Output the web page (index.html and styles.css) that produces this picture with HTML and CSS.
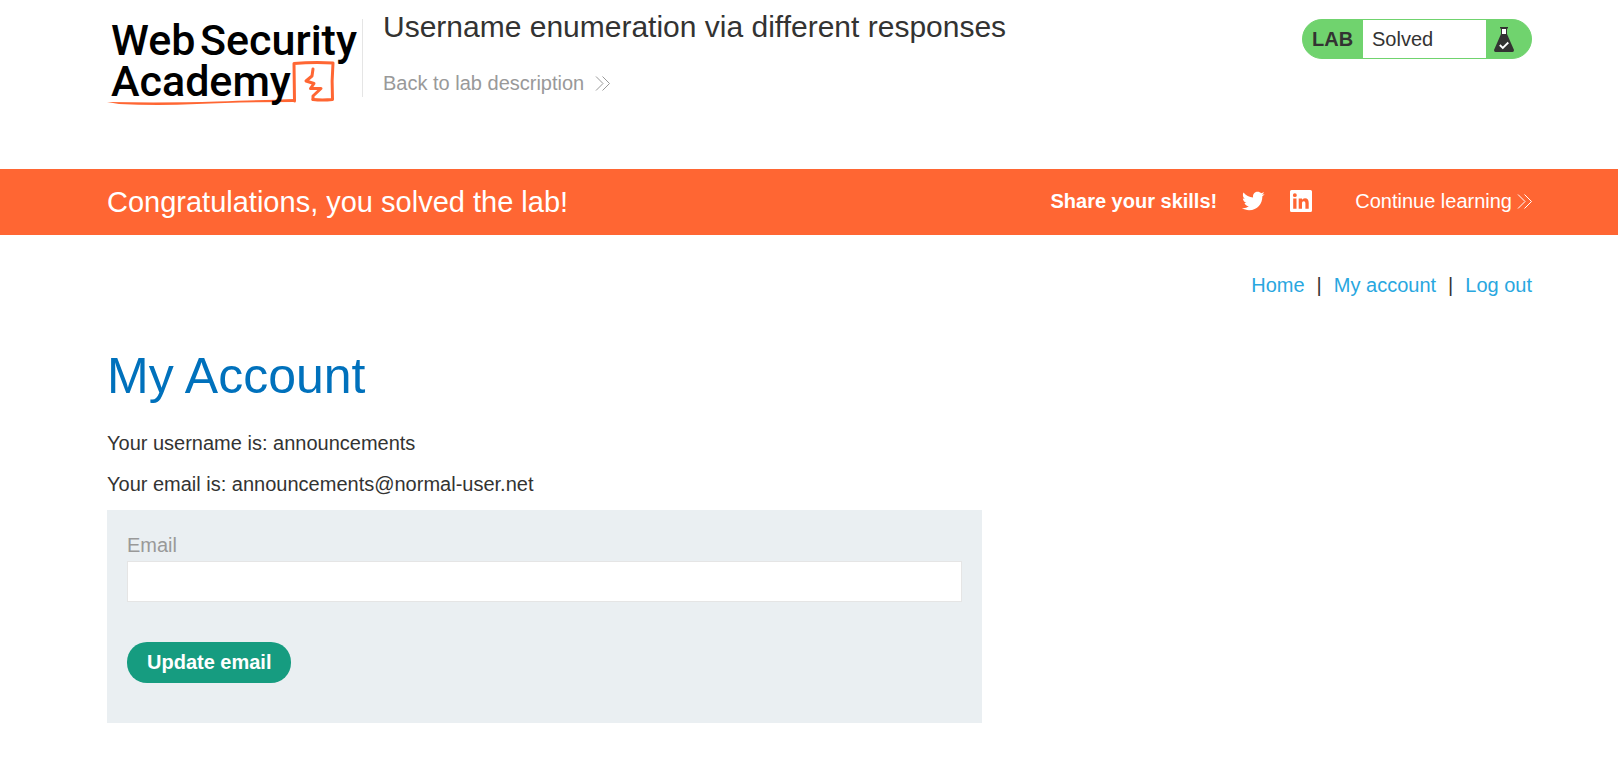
FILE: index.html
```html
<!DOCTYPE html>
<html lang="en">
<head>
<meta charset="utf-8">
<meta name="viewport" content="width=device-width, initial-scale=1">
<title>Username enumeration via different responses</title>
<link rel="stylesheet" href="styles.css">
</head>
<body>
<header class="lab-header container">
  <a class="logo" href="#" aria-label="Web Security Academy">
    <svg width="250" height="90" viewBox="0 0 250 90">
      <g fill="none" stroke="#ff6633" stroke-linecap="round" stroke-linejoin="round">
        <path stroke-width="3" d="M187.500 82L187 44.500Q206 43 226 44Q224.500 62 225.500 80.500Q215 81.500 206 80.500"/>
        <path stroke-width="3" d="M206 50L205 57L199 62L207 64.500L203.500 69.500L214 69.500L206 77L206 80.500"/>
      </g>
      <path fill="#ff6633" d="M0 83Q60 84 110 82.500T188 80V83Q130 83 90 85T12 85Z"/>
      <text class="logo-text" x="4" y="36">Web</text>
      <text class="logo-text" x="93" y="36">Security</text>
      <text class="logo-text" x="4" y="77">Academy</text>
    </svg>
  </a>
  <div class="title">
    <h2>Username enumeration via different responses</h2>
    <a class="back" href="#">Back to lab description
      <svg class="chevrons" width="14" height="15" viewBox="0 0 14 15"><path d="M0 .5l7 7-7 7M6.500 .5l7 7-7 7"/></svg>
    </a>
  </div>
  <div class="status">
    <span class="status-lab">LAB</span>
    <span class="status-text">Solved</span>
    <span class="status-icon">
      <svg width="20" height="26" viewBox="0 0 20 26">
        <path fill="#fff" d="M7 2h6v6H7z"/>
        <path fill="#333332" d="M6 0h8v1.500h-1V7h-1V2H8v5H7V1.500H6zM7 7h6l7 16q0 2-1.500 2h-17Q0 25 0 23z"/>
        <path fill="none" stroke="#fff" stroke-width="1.800" d="M5.800 18l3 3 5.500-5.500"/>
      </svg>
    </span>
  </div>
</header>

<section class="banner">
  <div class="banner-inner container">
    <h4>Congratulations, you solved the lab!</h4>
    <div class="share">
      <strong>Share your skills!</strong>
      <a href="#" aria-label="Twitter"><svg width="24" height="24" viewBox="0 0 24 24"><path fill="#fff" d="M23.643 4.937c-.835.37-1.732.62-2.675.733.962-.576 1.700-1.490 2.048-2.578-.9.534-1.897.922-2.958 1.130-.85-.904-2.060-1.470-3.400-1.470-2.572 0-4.658 2.086-4.658 4.660 0 .364.042.718.120 1.060-3.873-.195-7.304-2.050-9.602-4.868-.4.690-.63 1.490-.63 2.342 0 1.616.823 3.043 2.072 3.878-.764-.025-1.482-.234-2.110-.583v.060c0 2.257 1.605 4.140 3.737 4.568-.392.106-.803.162-1.227.162-.3 0-.593-.028-.877-.082.593 1.850 2.313 3.198 4.352 3.234-1.595 1.250-3.604 1.995-5.786 1.995-.376 0-.747-.022-1.112-.065 2.062 1.323 4.510 2.093 7.140 2.093 8.570 0 13.255-7.098 13.255-13.254 0-.2-.005-.402-.014-.602.910-.658 1.700-1.477 2.323-2.410z"/></svg></a>
      <a href="#" aria-label="LinkedIn"><svg width="24" height="24" viewBox="0 0 24 24"><path fill="#fff" fill-rule="evenodd" d="M2.500 1h19a1.500 1.500 0 0 1 1.500 1.500v19a1.500 1.500 0 0 1-1.500 1.500h-19a1.500 1.500 0 0 1-1.500-1.500v-19a1.500 1.500 0 0 1 1.500-1.500zM4.200 9.500v10.200h3.300V9.500zM5.850 4.200a1.950 1.950 0 1 0 0 3.900 1.950 1.950 0 0 0 0-3.900zM9.700 9.500v10.200H13v-5.200c0-1.400.5-2.300 1.800-2.300s1.600 1 1.600 2.400v5.100h3.300v-5.700c0-2.900-1-4.700-3.700-4.700-1.500 0-2.500.8-3 1.700V9.500z"/></svg></a>
      <a class="continue" href="#">Continue learning
        <svg class="chevrons" width="14" height="15" viewBox="0 0 14 15"><path d="M0 .5l7 7-7 7M6.500 .5l7 7-7 7"/></svg>
      </a>
    </div>
  </div>
</section>

<main class="container">
  <nav class="nav">
    <a href="#">Home</a><span>|</span><a href="#">My account</a><span>|</span><a href="#">Log out</a>
  </nav>
  <h1>My Account</h1>
  <p>Your username is: announcements</p>
  <p>Your email is: announcements@normal-user.net</p>
  <form class="email-form">
    <label for="email">Email</label>
    <input id="email" type="email" name="email">
    <button type="submit">Update email</button>
  </form>
</main>
</body>
</html>
```
FILE: styles.css
```css
* {
  box-sizing: border-box;
}

body {
  margin: 0;
  background: #fff;
  color: #333332;
  font-family: "Liberation Sans", Arial, sans-serif;
  font-size: 20px;
  line-height: 25px;
}

h1, h2, h4, p {
  margin: 0;
  font-weight: 400;
}

a {
  color: #29a7df;
  text-decoration: none;
}

svg {
  display: block;
  flex: none;
  overflow: visible;
}

.container {
  padding-left: 107px;
  padding-right: 86px;
}

.chevrons {
  fill: none;
  stroke: currentColor;
  stroke-width: 1;
}

.lab-header {
  display: flex;
  align-items: flex-start;
  padding-top: 19px;
  padding-bottom: 60px;
}

.logo-text {
  font-family: Roboto, sans-serif;
  font-size: 43px;
  font-weight: 500;
  fill: #000;
}

.title {
  flex: 1;
  min-height: 78px;
  margin-left: 5px;
  padding-left: 20px;
  border-left: 1px solid #e5e5e5;
}

.title h2 {
  margin-top: -10px;
  font-size: 30px;
  line-height: 36px;
}

.back {
  display: inline-flex;
  align-items: center;
  gap: 12px;
  margin-top: 26px;
  color: #999;
}

.status {
  display: flex;
  width: 230px;
  height: 40px;
  border: 1px solid #70d36e;
  border-radius: 20px;
  background: #70d36e;
  overflow: hidden;
  line-height: 38px;
}

.status-lab {
  padding: 0 9px;
  font-weight: 700;
  width: 60px;
}

.status-text {
  flex: 1;
  padding-left: 9px;
  background: #fff;
}

.status-icon {
  width: 45px;
  padding: 7px 8px;
}

.banner {
  background: #ff6633;
  color: #fff;
}

.banner-inner {
  display: flex;
  align-items: center;
  justify-content: space-between;
  min-height: 66px;
}

.banner h4 {
  font-size: 29px;
  line-height: 36px;
}

.banner a {
  color: #fff;
}

.share {
  display: flex;
  align-items: center;
  gap: 24px;
  padding-bottom: 2px;
}

.share .continue {
  display: flex;
  align-items: center;
  gap: 6px;
  margin-left: 18px;
}

.nav {
  display: flex;
  justify-content: flex-end;
  gap: 12px;
  padding-top: 38px;
}

h1 {
  margin: 48px 0 25px;
  color: #0071bc;
  font-size: 50px;
  line-height: 60px;
}

p {
  margin-bottom: 16px;
}

.email-form {
  display: flex;
  flex-direction: column;
  align-items: flex-start;
  width: 100%;
  max-width: 875px;
  margin-top: -3px;
  padding: 23px 20px 40px;
  background: #eaeff2;
}

.email-form label {
  color: #999;
}

.email-form input {
  width: 100%;
  height: 41px;
  margin: 3px 0 40px;
  padding: 0 10px;
  border: 1px solid #e5e5e5;
  background: #fff;
  font: inherit;
}

.email-form button {
  height: 41px;
  padding: 0 20px;
  border: 0;
  border-radius: 20px;
  background: #169c80;
  color: #fff;
  font: inherit;
  font-weight: 700;
}
```
